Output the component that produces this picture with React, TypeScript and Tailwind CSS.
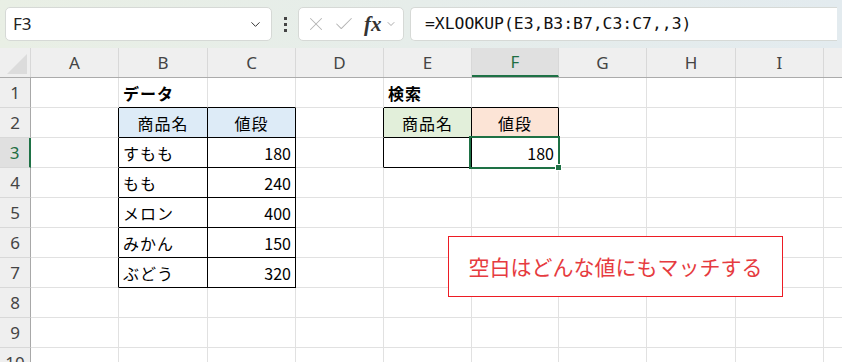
import { ChevronDown, X, Check } from "lucide-react";

type Col = { k: string; label: string; w: string };
type Cell = { t: string; right?: boolean; bold?: boolean; center?: boolean; bg?: string };

// J is only partly on screen, so its letter is not visible
const COLS: Col[] = [
  { k: "A", label: "A", w: "w-[88px]" },
  { k: "B", label: "B", w: "w-[89px]" },
  { k: "C", label: "C", w: "w-[88px]" },
  { k: "D", label: "D", w: "w-[88px]" },
  { k: "E", label: "E", w: "w-[88px]" },
  { k: "F", label: "F", w: "w-[87px]" },
  { k: "G", label: "G", w: "w-[88px]" },
  { k: "H", label: "H", w: "w-[89px]" },
  { k: "I", label: "I", w: "w-[88px]" },
  { k: "J", label: "", w: "w-[88px]" },
];

const ROWS = [1, 2, 3, 4, 5, 6, 7, 8, 9, 10];

const CELLS: Record<string, Cell> = {
  B1: { t: "データ", bold: true },
  E1: { t: "検索", bold: true },
  B2: { t: "商品名", center: true, bg: "bg-[#ddebf7]" },
  C2: { t: "値段", center: true, bg: "bg-[#ddebf7]" },
  E2: { t: "商品名", center: true, bg: "bg-[#e2efda]" },
  F2: { t: "値段", center: true, bg: "bg-[#fce4d6]" },
  B3: { t: "すもも" },
  C3: { t: "180", right: true },
  F3: { t: "180", right: true },
  B4: { t: "もも" },
  C4: { t: "240", right: true },
  B5: { t: "メロン" },
  C5: { t: "400", right: true },
  B6: { t: "みかん" },
  C6: { t: "150", right: true },
  B7: { t: "ぶどう" },
  C7: { t: "320", right: true },
};

// ranges with thin black borders: [colStart, colEnd, rowStart, rowEnd]
const BOXES = [
  [1, 2, 2, 7],
  [4, 5, 2, 3],
];

function inBox(c: number, r: number) {
  return BOXES.some(([c0, c1, r0, r1]) => c >= c0 && c <= c1 && r >= r0 && r <= r1);
}

function TopBar() {
  return (
    <div className="h-[48px] flex items-center px-[5px] bg-linear-to-r from-[#e9efe5] to-[#e3ebef]">
      {/* Name box */}
      <div className="w-[267px] h-[34px] bg-white border border-[#d6d9d6] rounded-[5px] flex items-center justify-between pl-[7px] pr-[8px]">
        <span className="text-[17px] text-[#222] font-['Noto_Sans',sans-serif]">F3</span>
        <ChevronDown size={15} strokeWidth={1.6} className="text-[#333]" />
      </div>

      {/* dots */}
      <div className="w-[26px] flex flex-col items-center gap-[3px]">
        <span className="w-[3px] h-[3px] bg-[#444]" />
        <span className="w-[3px] h-[3px] bg-[#444]" />
        <span className="w-[3px] h-[3px] bg-[#444]" />
      </div>

      {/* fx box */}
      <div className="w-[106px] h-[34px] bg-white border border-[#d6d9d6] rounded-[5px] flex items-center pl-[6px]">
        <X size={22} strokeWidth={1.1} className="text-[#b4b4b4]" />
        <Check size={22} strokeWidth={1.1} className="text-[#b4b4b4] ml-[6px]" />
        <span className="ml-[9px] text-[21px] italic font-semibold leading-none text-[#333] font-['Liberation_Serif',serif]">
          fx
        </span>
        <ChevronDown size={12} strokeWidth={1.4} className="text-[#888] ml-[3px]" />
      </div>

      {/* formula */}
      <div className="ml-[6px] flex-1 h-[34px] bg-white border border-[#d6d9d6] rounded-l-[5px] border-r-0 flex items-center pl-[14px]">
        <span className="text-[16.4px] text-[#111] font-['DejaVu_Sans_Mono',monospace]">
          =XLOOKUP(E3,B3:B7,C3:C7,,3)
        </span>
      </div>
    </div>
  );
}

function ColumnHeader() {
  return (
    <div className="flex h-[30px] border-b border-[#ababab] bg-[#efefef]">
      <div className="w-[31px] h-full shrink-0 border-r border-[#d8d8d8] relative">
        <div className="absolute right-[3px] bottom-[3px] w-0 h-0 border-l-[20px] border-l-transparent border-b-[20px] border-b-[#dcdcdc]" />
      </div>
      {COLS.map((c) => (
        <div
          key={c.k}
          className={
            c.k === "F"
              ? `${c.w} h-full shrink-0 flex items-center justify-center border-r border-[#d8d8d8] bg-[#e0e0e0] border-b-2 border-b-[#1e7145] text-[#1e6e42] text-[17px] font-['Noto_Sans',sans-serif]`
              : `${c.w} h-full shrink-0 flex items-center justify-center border-r border-[#d8d8d8] text-[#444] text-[17px] font-['Noto_Sans',sans-serif]`
          }
        >
          {c.label}
        </div>
      ))}
    </div>
  );
}

function Row({ r }: { r: number }) {
  return (
    <div className="flex h-[30px]">
      <div
        className={
          r === 3
            ? "w-[31px] h-full shrink-0 flex items-center justify-center bg-[#e0e0e0] border-r-2 border-r-[#1e7145] border-b border-b-[#d8d8d8] text-[17px] text-[#1e6e42] font-['Noto_Sans',sans-serif]"
            : "w-[31px] h-full shrink-0 flex items-center justify-center bg-[#efefef] border-r border-r-[#a8a8a8] border-b border-b-[#d8d8d8] text-[17px] text-[#444] font-['Noto_Sans',sans-serif]"
        }
      >
        {r}
      </div>
      {COLS.map((c, ci) => {
        const cell = CELLS[`${c.k}${r}`];
        const rb = inBox(ci, r) || inBox(ci + 1, r);
        const bb = inBox(ci, r) || inBox(ci, r + 1);
        return (
          <div
            key={c.k}
            className={[
              c.w,
              "h-full shrink-0 flex items-center px-[4px] whitespace-nowrap",
              "text-[16px] text-black font-['Noto_Sans_CJK_JP',sans-serif]",
              rb ? "border-r border-r-black" : "border-r border-r-[#e1e1e1]",
              bb ? "border-b border-b-black" : "border-b border-b-[#e1e1e1]",
              cell?.bg ?? "",
              cell?.center ? "justify-center" : cell?.right ? "justify-end" : "justify-start",
              cell?.right ? "text-[16.5px]" : "tracking-[1px]",
              cell?.bold ? "font-bold" : "",
            ].join(" ")}
          >
            {cell?.t}
          </div>
        );
      })}
    </div>
  );
}

export default function App() {
  return (
    <div className="w-[842px] h-[362px] overflow-hidden bg-white relative">
      <TopBar />
      <ColumnHeader />
      {ROWS.map((r) => (
        <Row key={r} r={r} />
      ))}

      {/* active cell F3 */}
      <div className="absolute left-[469px] top-[136px] w-[91px] h-[33px] border-2 border-[#1e7145] pointer-events-none" />
      <div className="absolute left-[555px] top-[164px] w-[7px] h-[7px] bg-[#1e7145] border border-white" />

      {/* note text box */}
      <div className="absolute left-[448px] top-[236px] w-[335px] h-[61px] bg-white border border-[#ed1c24] flex items-center justify-center">
        <span className="text-[21px] text-[#e63b40] font-['Noto_Sans_CJK_JP',sans-serif]">
          空白はどんな値にもマッチする
        </span>
      </div>
    </div>
  );
}
